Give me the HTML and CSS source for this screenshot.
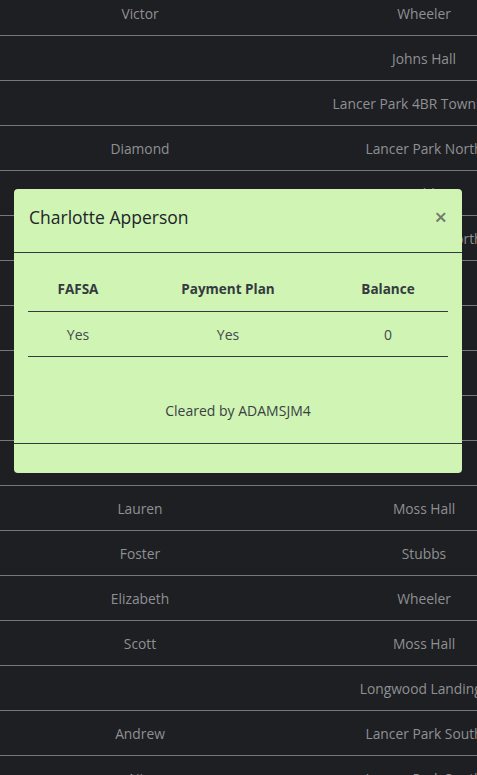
FILE: index.html
```html
<!DOCTYPE html>
<html lang="en">
<head>
<meta charset="utf-8">
<title>Residents</title>
<link rel="stylesheet" href="styles.css">
</head>
<body>
<div class="page">
  <table class="roster">
    <colgroup><col class="c-first"><col class="c-hall"></colgroup>
    <tbody>
      <tr><td>Victor</td><td>Wheeler</td></tr>
      <tr><td></td><td>Johns Hall</td></tr>
      <tr><td></td><td>Lancer Park 4BR Townhouse</td></tr>
      <tr><td>Diamond</td><td>Lancer Park North</td></tr>
      <tr><td></td><td>Stubbs</td></tr>
      <tr><td></td><td>Lancer Park North</td></tr>
      <tr><td></td><td></td></tr>
      <tr><td></td><td></td></tr>
      <tr><td></td><td></td></tr>
      <tr><td></td><td></td></tr>
      <tr><td></td><td></td></tr>
      <tr><td>Lauren</td><td>Moss Hall</td></tr>
      <tr><td>Foster</td><td>Stubbs</td></tr>
      <tr><td>Elizabeth</td><td>Wheeler</td></tr>
      <tr><td>Scott</td><td>Moss Hall</td></tr>
      <tr><td></td><td>Longwood Landings</td></tr>
      <tr><td>Andrew</td><td>Lancer Park South</td></tr>
      <tr><td>Nia</td><td>Lancer Park South</td></tr>
    </tbody>
  </table>
</div>

<div class="modal">
  <div class="modal-header">
    <h5 class="modal-title">Charlotte Apperson</h5>
    <button class="close" type="button" aria-label="Close">&times;</button>
  </div>
  <div class="modal-body">
    <table class="status">
      <colgroup><col class="s1"><col class="s2"><col class="s3"></colgroup>
      <thead>
        <tr><th>FAFSA</th><th>Payment Plan</th><th>Balance</th></tr>
      </thead>
      <tbody>
        <tr><td>Yes</td><td>Yes</td><td>0</td></tr>
      </tbody>
    </table>
    <p class="cleared">Cleared by ADAMSJM4</p>
  </div>
  <div class="modal-footer"></div>
</div>
</body>
</html>
```
FILE: styles.css
```css
html, body {
  margin: 0;
  padding: 0;
}
body {
  background: #1e1f22;
  font-family: "Open Sans", "Noto Sans", sans-serif;
  overflow: hidden;
  width: 477px;
  height: 775px;
}
.page {
  margin-top: -9px;
}
.roster {
  border-collapse: collapse;
  table-layout: fixed;
  width: 568px;
}
.c-first { width: 280px; }
.c-hall { width: 288px; }
.roster td {
  height: 44px;
  padding: 0;
  text-align: center;
  white-space: nowrap;
  color: #8e9094;
  font-size: 13.8px;
  border-bottom: 1px solid #75777a;
}

.modal {
  position: fixed;
  left: 14px;
  top: 189px;
  width: 448px;
  background: #cff4b4;
  border-radius: 4px;
  color: #212529;
}
.modal-header {
  display: flex;
  align-items: flex-start;
  justify-content: space-between;
  height: 64px;
  padding: 13px 15px 0;
  box-sizing: border-box;
  border-bottom: 1px solid #343a40;
}
.modal-title {
  margin: 0;
  font-size: 17.5px;
  font-weight: 400;
  line-height: 30px;
}
.close {
  background: none;
  border: 0;
  padding: 0;
  margin: 0;
  font-family: "Open Sans", sans-serif;
  font-size: 22px;
  font-weight: 600;
  line-height: 1;
  color: #717c6c;
  margin-top: 3px;
}
.modal-body {
  padding: 14px 14px 20px;
  border-bottom: 1px solid #343a40;
}
.status {
  width: 420px;
  border-collapse: collapse;
  table-layout: fixed;
  margin-bottom: 42px;
}
.s1 { width: 100px; }
.s2 { width: 200px; }
.s3 { width: 120px; }
.status th, .status td {
  height: 44px;
  padding: 0;
  text-align: center;
  font-size: 14px;
  border-bottom: 1px solid #343a40;
}
.status th {
  font-size: 13.5px;
  font-weight: 700;
  color: #343a40;
}
.status td {
  color: #454a4f;
}
.cleared {
  margin: 0;
  text-align: center;
  font-size: 14px;
  line-height: 24px;
  color: #3a3f44;
}
.modal-footer {
  height: 29px;
}
```
